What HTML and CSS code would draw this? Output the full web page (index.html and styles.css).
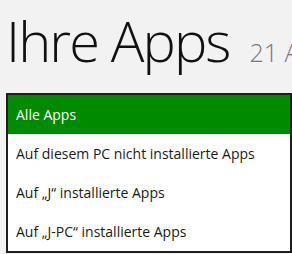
FILE: index.html
```html
<!DOCTYPE html>
<html lang="de">
  <head>
    <meta charset="UTF-8" />
    <title>Ihre Apps</title>
    <link rel="stylesheet" href="styles.css">
  </head>
  <body>
    <header class="header">
      <h1>Ihre Apps</h1>
      <span class="count">21 Apps</span>
    </header>

    <ul class="dropdown">
      <li class="selected">Alle Apps</li>
      <li>Auf diesem PC nicht installierte Apps</li>
      <li>Auf „J“ installierte Apps</li>
      <li>Auf „J-PC“ installierte Apps</li>
    </ul>
  </body>
</html>
```

FILE: styles.css
```css
body {
  margin: 0;
  background-color: #f2f2f2;
  font-family: "Open Sans", "Noto Sans", sans-serif;
  color: #1a1a1a;
  overflow: hidden;
}
.header {
  display: flex;
  align-items: baseline;
  white-space: nowrap;
  padding: 8px 0 0 6px;
  height: 93px;
  box-sizing: border-box;
}
.header h1 {
  margin: 0;
  font-size: 56px;
  font-weight: 300;
  letter-spacing: -1.9px;
  line-height: 64px;
  color: #111;
}
.count {
  margin-left: 20px;
  font-size: 25px;
  font-weight: 300;
  color: #777;
}
.dropdown {
  list-style: none;
  margin: 0 0 0 6px;
  padding: 0;
  width: 286px;
  box-sizing: border-box;
  border: 2px solid #1e1e1e;
  background-color: #fff;
}
.dropdown li {
  height: 39px;
  line-height: 39px;
  padding-left: 8px;
  font-size: 14px;
}
.dropdown .selected {
  background-color: #008a00;
  color: #fff;
}
```
